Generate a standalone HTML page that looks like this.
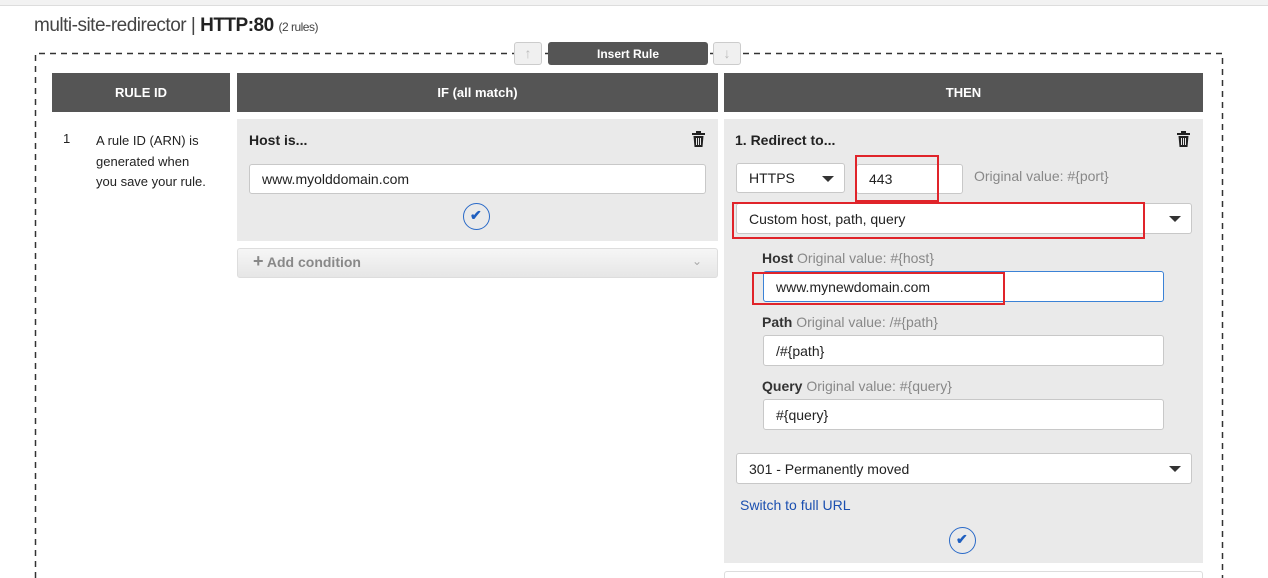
<!DOCTYPE html>
<html style="overflow:hidden;height:578px"><head><style>
html,body{margin:0;width:1268px;height:578px;overflow:hidden}
body{background:#fff;font-family:"Liberation Sans",sans-serif;color:#222;position:relative}
.a{position:absolute;box-sizing:border-box}
.hd{background:#555;color:#fff;font-weight:bold;font-size:13px;display:flex;align-items:center;justify-content:center}
.pn{background:#eaeaea}
.in{background:#fff;border:1px solid #c8c8c8;border-radius:3px;font-size:14px;padding-left:12px;display:flex;align-items:center}
.red{border:2px solid #e0242a}
.lbl{font-size:14px;color:#888}
.lbl b{color:#333}
.caret{position:absolute;right:10px;top:12px;width:0;height:0;border-left:6px solid transparent;border-right:6px solid transparent;border-top:6px solid #333}
.chk{width:27px;height:27px;border:1.5px solid #2a6ac8;border-radius:50%}
</style></head><body>
<div class="a" style="left:0;top:0;width:1268px;height:6px;background:#f2f2f2;border-bottom:1px solid #ddd"></div>
<div class="a" style="left:34px;top:15px;font-size:19px;color:#444;white-space:nowrap;letter-spacing:-0.5px">multi-site-redirector | <b style="color:#222">HTTP:80</b> <span style="font-size:12px">(2 rules)</span></div>
<svg class="a" style="left:0;top:0" width="1268" height="578"><path d="M35.5 578V53.5H1222.5V578" fill="none" stroke="#333" stroke-width="1.5" stroke-dasharray="6,5"/></svg>
<div class="a" style="left:514px;top:42px;width:28px;height:23px;background:#f0f0f0;border:1px solid #ccc;border-radius:3px;color:#bbb;text-align:center;font-size:14px;line-height:21px">↑</div>
<div class="a" style="left:713px;top:42px;width:28px;height:23px;background:#f0f0f0;border:1px solid #ccc;border-radius:3px;color:#bbb;text-align:center;font-size:14px;line-height:21px">↓</div>
<div class="a hd" style="left:548px;top:42px;width:160px;height:23px;border-radius:3px;font-size:12px">Insert Rule</div>
<div class="a hd" style="left:52px;top:73px;width:178px;height:39px">RULE ID</div>
<div class="a hd" style="left:237px;top:73px;width:481px;height:39px">IF (all match)</div>
<div class="a hd" style="left:724px;top:73px;width:479px;height:39px">THEN</div>
<div class="a" style="left:63px;top:131px;font-size:13px">1</div>
<div class="a" style="left:96px;top:131px;font-size:13px;line-height:20.5px;white-space:nowrap">A rule ID (ARN) is<br>generated when<br>you save your rule.</div>
<div class="a pn" style="left:237px;top:119px;width:481px;height:122px"></div>
<div class="a" style="left:249px;top:132px;font-size:14px;font-weight:bold">Host is...</div>
<svg class="a" style="left:692px;top:131px" width="13" height="16" viewBox="0 0 13 16"><rect x="0" y="2" width="13" height="2" fill="#222"/><rect x="4" y="0" width="5" height="2" fill="#222"/><path d="M1.5 5h10l-1 11h-8z" fill="#222"/><path d="M4.5 7v7M6.5 7v7M8.5 7v7" stroke="#eaeaea" stroke-width="1"/></svg>
<div class="a in" style="left:249px;top:164px;width:457px;height:30px">www.myolddomain.com</div>
<div class="a chk" style="left:463px;top:203px"></div>
<div class="a" style="left:470px;top:207px;color:#1f5fbf;font-size:14px;font-weight:bold">✔</div>
<div class="a" style="left:237px;top:248px;width:481px;height:30px;background:linear-gradient(#f6f6f6,#e6e6e6);border:1px solid #ddd;border-radius:3px"></div>
<div class="a" style="left:253px;top:254px;font-size:14px;font-weight:bold;color:#888"><span style="font-size:18px;line-height:14px">+</span> Add condition</div>
<div class="a" style="left:692px;top:254px;font-size:12px;color:#aaa">⌄</div>
<div class="a pn" style="left:724px;top:119px;width:479px;height:444px"></div>
<div class="a" style="left:724px;top:571px;width:479px;height:7px;border:1px solid #ddd;border-bottom:none;border-radius:3px 3px 0 0"></div>
<div class="a" style="left:735px;top:132px;font-size:14px;font-weight:bold">1. Redirect to...</div>
<svg class="a" style="left:1177px;top:131px" width="13" height="16" viewBox="0 0 13 16"><rect x="0" y="2" width="13" height="2" fill="#222"/><rect x="4" y="0" width="5" height="2" fill="#222"/><path d="M1.5 5h10l-1 11h-8z" fill="#222"/><path d="M4.5 7v7M6.5 7v7M8.5 7v7" stroke="#eaeaea" stroke-width="1"/></svg>
<div class="a in" style="left:736px;top:163px;width:109px;height:30px">HTTPS<span class="caret"></span></div>
<div class="a in" style="left:856px;top:164px;width:107px;height:30px">443</div>
<div class="a red" style="left:855px;top:155px;width:84px;height:47px"></div>
<div class="a lbl" style="left:974px;top:168px">Original value: #{port}</div>
<div class="a in" style="left:736px;top:203px;width:456px;height:31px">Custom host, path, query<span class="caret"></span></div>
<div class="a red" style="left:732px;top:202px;width:413px;height:37px"></div>
<div class="a lbl" style="left:762px;top:250px"><b>Host</b> Original value: #{host}</div>
<div class="a in" style="left:763px;top:271px;width:401px;height:31px;border-color:#3b82d6">www.mynewdomain.com</div>
<div class="a red" style="left:752px;top:272px;width:253px;height:33px"></div>
<div class="a lbl" style="left:762px;top:314px"><b>Path</b> Original value: /#{path}</div>
<div class="a in" style="left:763px;top:335px;width:401px;height:31px">/#{path}</div>
<div class="a lbl" style="left:762px;top:378px"><b>Query</b> Original value: #{query}</div>
<div class="a in" style="left:763px;top:399px;width:401px;height:31px">#{query}</div>
<div class="a in" style="left:736px;top:453px;width:456px;height:31px">301 - Permanently moved<span class="caret"></span></div>
<div class="a" style="left:740px;top:497px;font-size:14px;color:#1a4fb0">Switch to full URL</div>
<div class="a chk" style="left:949px;top:527px"></div>
<div class="a" style="left:956px;top:531px;color:#1f5fbf;font-size:14px;font-weight:bold">✔</div>
</body></html>
